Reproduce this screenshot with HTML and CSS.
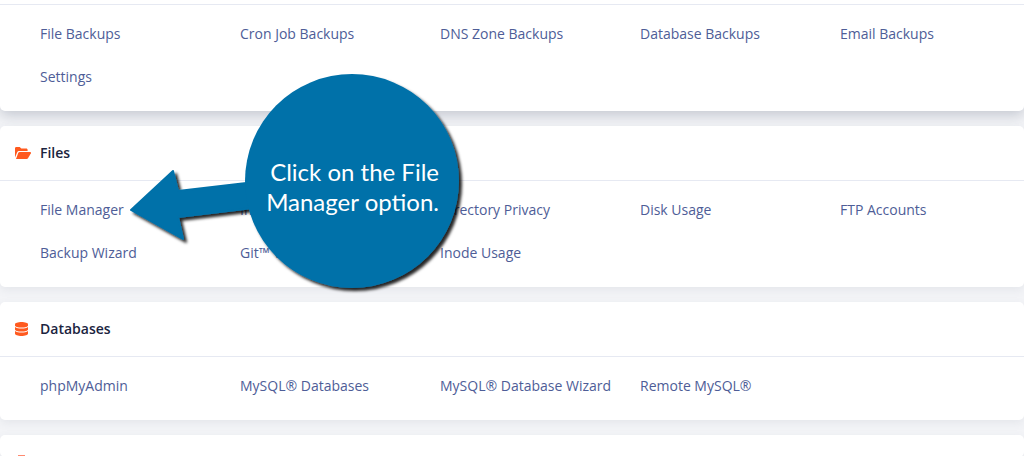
FILE: index.html
```html
<!DOCTYPE html>
<html lang="en">
<head>
<meta charset="utf-8">
<title>cPanel Files</title>
<link rel="stylesheet" href="styles.css">
</head>
<body>
<main class="page">
  <section class="card card-top">
    <div class="head-stub"></div>
    <div class="items">
      <a class="item">File Backups</a>
      <a class="item">Cron Job Backups</a>
      <a class="item">DNS Zone Backups</a>
      <a class="item">Database Backups</a>
      <a class="item">Email Backups</a>
      <a class="item">Settings</a>
    </div>
  </section>
  <section class="card">
    <header class="head">
      <svg class="icon" viewBox="0 0 16 12" aria-hidden="true"><path d="M0 10.600V1.300C0 .6.6 0 1.300 0h3.400l1.600 1.600h5c.7 0 1.300.6 1.300 1.300V4H4.400c-1 0-1.900.5-2.300 1.400z"/><path d="M1 12h10.600c.6 0 1.100-.3 1.400-.8l2.900-5c.3-.6-.1-1.200-.8-1.200H4.700c-.6 0-1.100.3-1.400.8z"/></svg>
      <h2 class="title">Files</h2>
    </header>
    <div class="items">
      <a class="item">File Manager</a>
      <a class="item">Images</a>
      <a class="item">Directory Privacy</a>
      <a class="item">Disk Usage</a>
      <a class="item">FTP Accounts</a>
      <a class="item">Backup Wizard</a>
      <a class="item">Git™ Version Control</a>
      <a class="item">Inode Usage</a>
    </div>
  </section>
  <section class="card">
    <header class="head">
      <svg class="icon icon-db" viewBox="0 0 13 14" aria-hidden="true"><path d="M6.500 0C10 0 13 1 13 2.200v1.200C13 4.600 10 5.600 6.500 5.600S0 4.600 0 3.400V2.200C0 1 3 0 6.500 0z"/><path d="M0 5c1.400 1 3.900 1.500 6.500 1.500S11.600 6 13 5v2.400C13 8.600 10 9.600 6.500 9.600S0 8.600 0 7.400z"/><path d="M0 9c1.400 1 3.900 1.500 6.500 1.500S11.600 10 13 9v2.800C13 13 10 14 6.500 14S0 13 0 11.800z"/></svg>
      <h2 class="title">Databases</h2>
    </header>
    <div class="items">
      <a class="item">phpMyAdmin</a>
      <a class="item">MySQL® Databases</a>
      <a class="item">MySQL® Database Wizard</a>
      <a class="item">Remote MySQL®</a>
    </div>
  </section>
  <section class="card card-clipped">
    <svg class="icon-next" viewBox="0 0 8 1" aria-hidden="true"><path d="M0 0h8v1H0z"/></svg>
  </section>
</main>
<div class="callout">
  <svg class="callout-art" viewBox="0 0 340 240" aria-hidden="true">
    <defs>
      <filter id="drop" x="-20%" y="-20%" width="140%" height="140%">
        <feDropShadow dx="3" dy="3" stdDeviation="1.500" flood-color="#000" flood-opacity=".85"/>
      </filter>
    </defs>
    <g filter="url(#drop)" fill="#0071a9">
      <path d="M1 136 43 97 48 117 125 108 130 133 48 143 53 165z" stroke="#0071a9" stroke-width="2" stroke-linejoin="round"/>
      <circle cx="222" cy="107" r="107"/>
    </g>
  </svg>
  <p class="callout-text">Click on the File<br>Manager option.</p>
</div>
</body>
</html>
```
FILE: styles.css
```css
* { box-sizing: border-box; }

html, body {
  margin: 0;
  height: 456px;
  overflow: hidden;
}

body {
  position: relative;
  background: #f3f4f7;
  font-family: "Open Sans", "Liberation Sans", sans-serif;
}

.page {
  display: flex;
  flex-direction: column;
  gap: 15px;
  height: 456px;
  overflow: hidden;
}

.card {
  flex: none;
  background: #fff;
  border-radius: 5px;
  box-shadow: 0 3px 10px rgba(90, 100, 125, .09);
}

.card-top {
  border-radius: 0 0 5px 5px;
  box-shadow: 0 4px 14px rgba(70, 80, 105, .28);
}

.head-stub {
  height: 5px;
  border-bottom: 1px solid #e6e9f2;
}

.head {
  display: flex;
  align-items: center;
  height: 55px;
  padding-left: 15px;
  border-bottom: 1px solid #e6e9f2;
}

.icon {
  width: 16px;
  height: 12px;
  margin-right: 9px;
  fill: #ff5a1f;
}

.icon-db {
  width: 13px;
  height: 14px;
  margin-right: 12px;
}

.icon-next {
  display: block;
  width: 7px;
  height: 1px;
  margin: 20px 0 0 18px;
  fill: #ff8a70;
}

.title {
  margin: 0 0 2px;
  font-size: 14px;
  font-weight: 600;
  color: #1b2440;
}

.items {
  display: grid;
  grid-template-columns: repeat(5, 200px);
  grid-auto-rows: 43px;
  align-items: center;
  padding: 7px 0 13px 40px;
}

.item {
  font-size: 14px;
  color: #4e5d97;
  white-space: nowrap;
}

.card-clipped {
  height: 22px;
  overflow: hidden;
}

.callout {
  position: absolute;
  left: 130px;
  top: 74px;
  width: 340px;
  height: 240px;
}

.callout-art {
  display: block;
  width: 340px;
  height: 240px;
}

.callout-text {
  position: absolute;
  right: 31px;
  top: 83px;
  margin: 0;
  font-family: Lato, "Open Sans", sans-serif;
  font-size: 24px;
  line-height: 30px;
  text-align: right;
  white-space: nowrap;
  color: #fff;
}
```
